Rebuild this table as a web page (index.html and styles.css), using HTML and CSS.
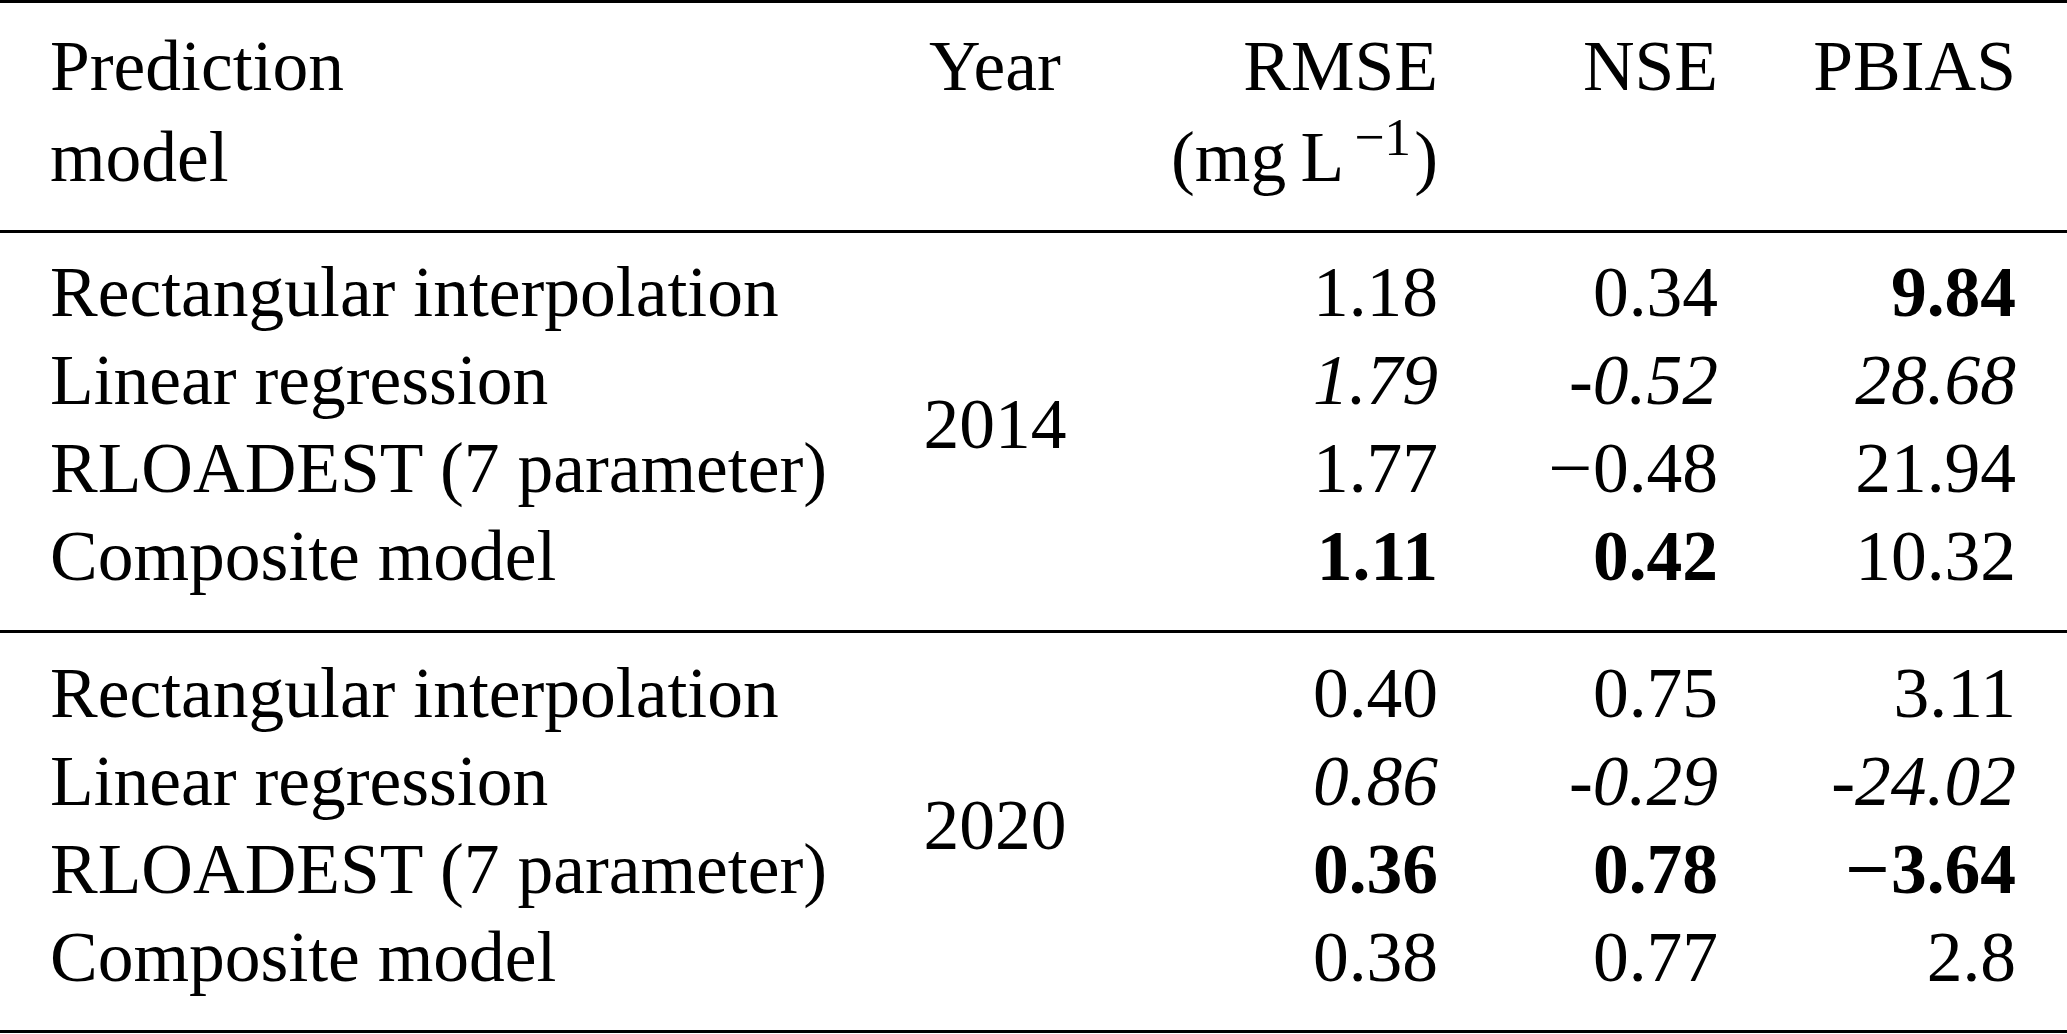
FILE: index.html
```html
<!DOCTYPE html>
<html lang="en">
<head>
<meta charset="utf-8">
<title>Prediction model performance</title>
<link rel="stylesheet" href="styles.css">
</head>
<body>
<table class="results">
  <colgroup>
    <col class="c-model">
    <col class="c-year">
    <col class="c-rmse">
    <col class="c-nse">
    <col class="c-pbias">
  </colgroup>
  <thead>
    <tr>
      <th class="model">Prediction<br>model</th>
      <th class="year">Year</th>
      <th class="num">RMSE<br>(mg&thinsp;L<sup class="exp">−1</sup>)</th>
      <th class="num">NSE</th>
      <th class="num last">PBIAS</th>
    </tr>
  </thead>
  <tbody class="group">
    <tr class="first">
      <td class="model">Rectangular interpolation</td>
      <td class="year" rowspan="4">2014</td>
      <td class="num">1.18</td>
      <td class="num">0.34</td>
      <td class="num last"><b>9.84</b></td>
    </tr>
    <tr>
      <td class="model">Linear regression</td>
      <td class="num"><i>1.79</i></td>
      <td class="num"><i>-0.52</i></td>
      <td class="num last"><i>28.68</i></td>
    </tr>
    <tr>
      <td class="model">RLOADEST (7 parameter)</td>
      <td class="num">1.77</td>
      <td class="num"><span class="minus">−</span>0.48</td>
      <td class="num last">21.94</td>
    </tr>
    <tr class="final">
      <td class="model">Composite model</td>
      <td class="num"><b>1.11</b></td>
      <td class="num"><b>0.42</b></td>
      <td class="num last">10.32</td>
    </tr>
  </tbody>
  <tbody class="group second">
    <tr class="first">
      <td class="model">Rectangular interpolation</td>
      <td class="year" rowspan="4">2020</td>
      <td class="num">0.40</td>
      <td class="num">0.75</td>
      <td class="num last">3.11</td>
    </tr>
    <tr>
      <td class="model">Linear regression</td>
      <td class="num"><i>0.86</i></td>
      <td class="num"><i>-0.29</i></td>
      <td class="num last"><i>-24.02</i></td>
    </tr>
    <tr>
      <td class="model">RLOADEST (7 parameter)</td>
      <td class="num"><b>0.36</b></td>
      <td class="num"><b>0.78</b></td>
      <td class="num last"><b><span class="minus">−</span>3.64</b></td>
    </tr>
    <tr class="final">
      <td class="model">Composite model</td>
      <td class="num">0.38</td>
      <td class="num">0.77</td>
      <td class="num last">2.8</td>
    </tr>
  </tbody>
</table>
</body>
</html>
```

FILE: styles.css
```css
html, body {
  margin: 0;
  padding: 0;
  background: #ffffff;
}

body {
  width: 2067px;
  height: 1034px;
  overflow: hidden;
  color: #000000;
  font-family: "Liberation Serif", "Times New Roman", serif;
  font-size: 71.5px;
}

.results {
  width: 2067px;
  table-layout: fixed;
  border-collapse: separate;
  border-spacing: 0;
}

.c-model { width: 923px; }
.c-year  { width: 144px; }
.c-rmse  { width: 371px; }
.c-nse   { width: 280px; }
.c-pbias { width: 349px; }

th, td {
  padding: 0;
  font-weight: normal;
  white-space: nowrap;
  line-height: 88px;
  vertical-align: top;
}

.model { text-align: left; padding-left: 50px; }
.year  { text-align: center; }
.num   { text-align: right; }
.last  { padding-right: 51px; }

b { font-weight: bold; }
i { font-style: italic; }

.minus {
  display: inline-block;
  transform: scaleX(1.1);
  margin-right: 3px;
}

/* header */
thead th {
  line-height: 91px;
  border-top: 3px solid #000;
  border-bottom: 3px solid #000;
  padding-top: 17px;
  padding-bottom: 28px;
}

.exp {
  font-size: 0.75em;
  line-height: 0;
  vertical-align: 26px;
  margin-left: 10px;
  margin-right: 3px;
}

/* body groups */
tbody .first td { padding-top: 15px; }
tbody .final td { padding-bottom: 30px; border-bottom: 3px solid #000; }

tbody td.year {
  vertical-align: middle;
  padding-top: 15px;
  padding-bottom: 30px;
  border-bottom: 3px solid #000;
}

.second .first td { padding-top: 16px; }
.second .final td { padding-bottom: 29px; }
.second td.year { padding-top: 16px; padding-bottom: 29px; }
```
